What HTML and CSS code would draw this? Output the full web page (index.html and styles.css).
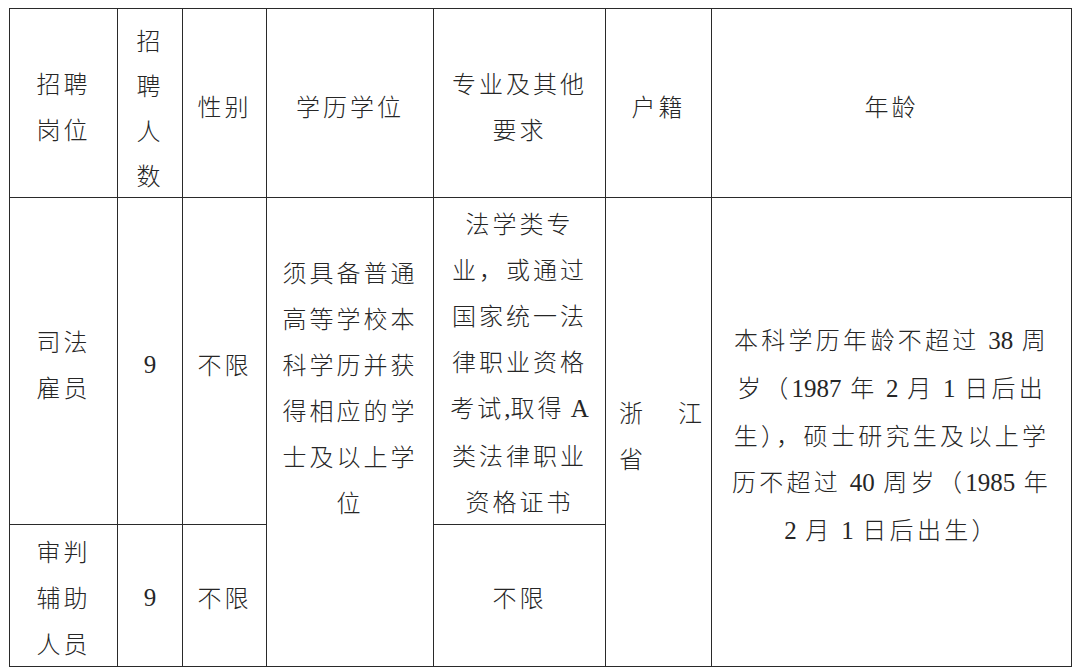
FILE: index.html
```html
<!DOCTYPE html>
<html lang="zh-CN">
<head>
<meta charset="utf-8">
<title>招聘表</title>
<link rel="stylesheet" href="styles.css">
</head>
<body>
<table class="t">
  <colgroup>
    <col class="c1"><col class="c2"><col class="c3"><col class="c4"><col class="c5"><col class="c6"><col class="c7">
  </colgroup>
  <tr class="rh">
    <td>招聘<br>岗位</td>
    <td class="vert">招<br>聘<br>人<br>数</td>
    <td>性别</td>
    <td>学历学位</td>
    <td>专业及其他<br>要求</td>
    <td>户籍</td>
    <td>年龄</td>
  </tr>
  <tr class="r2">
    <td>司法<br>雇员</td>
    <td><span class="num">9</span></td>
    <td>不限</td>
    <td rowspan="2" class="edu">须具备普通<br>高等学校本<br>科学历并获<br>得相应的学<br>士及以上学<br>位</td>
    <td class="major">法学类专<br>业，或通过<br>国家统一法<br>律职业资格<br>考试<span class="num">,</span>取得<span class="num"> A</span><br>类法律职业<br>资格证书</td>
    <td rowspan="2" class="hj"><div class="hj1"><span>浙</span><span>江</span></div><div>省</div></td>
    <td rowspan="2" class="age">本科学历年龄不超过 <span class="num">38</span> 周<br>岁（<span class="num">1987</span> 年 <span class="num">2</span> 月 <span class="num">1</span> 日后出<br>生），硕士研究生及以上学<br>历不超过 <span class="num">40</span> 周岁（<span class="num">1985</span> 年<br><span class="num">2</span> 月 <span class="num">1</span> 日后出生）</td>
  </tr>
  <tr class="r3">
    <td>审判<br>辅助<br>人员</td>
    <td><span class="num">9</span></td>
    <td>不限</td>
    <td>不限</td>
  </tr>
</table>
</body>
</html>
```
FILE: styles.css
```css
html, body {
  margin: 0;
  padding: 0;
  background: #ffffff;
}
body {
  padding: 8px 0 0 9px;
  font-family: "Noto Sans CJK SC", "Noto Sans", sans-serif;
  font-weight: 300;
  color: #262626;
}
.t {
  border-collapse: collapse;
  table-layout: fixed;
  width: 1062px;
}
.c1 { width: 108px; }
.c2 { width: 65px; }
.c3 { width: 84px; }
.c4 { width: 167px; }
.c5 { width: 172px; }
.c6 { width: 106px; }
.c7 { width: 360px; }
.t td {
  border: 1px solid #2a2a2a;
  padding: 6px 0 0 0;
  text-align: center;
  vertical-align: middle;
  font-size: 24px;
  line-height: 46px;
  letter-spacing: 3px;
  white-space: nowrap;
}
.rh { height: 188px; }
.r2 { height: 327px; }
.r3 { height: 142px; }
.t td.vert {
  padding-top: 8px;
  line-height: 45px;
}
.num {
  font-family: "Liberation Serif", "Times New Roman", serif;
  font-weight: 400;
  letter-spacing: 0;
  font-size: 25px;
}
.t td.edu {
  vertical-align: top;
  padding-top: 51px;
}
.t td.major {
  padding-top: 2px;
  line-height: 46px;
}
.r3 td {
  line-height: 46px;
}
.t .r3 td {
  padding-top: 2px;
}
.t td.hj {
  text-align: left;
  padding: 6px 9px 0 13px;
  letter-spacing: 0;
}
.hj1 {
  display: flex;
  justify-content: space-between;
}
.t td.age {
  letter-spacing: 3.3px;
}
```
